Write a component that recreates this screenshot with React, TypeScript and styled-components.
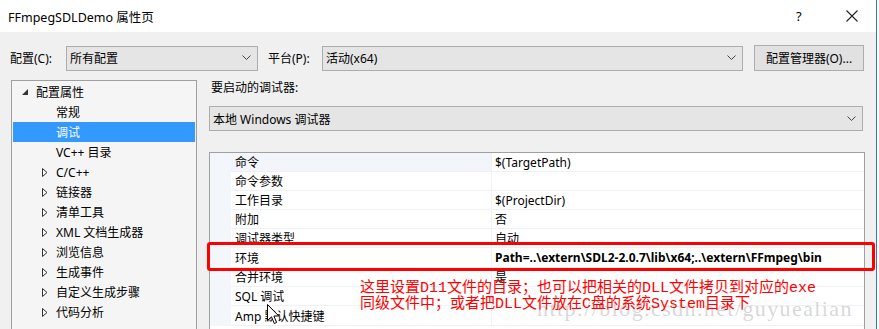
import styled, { createGlobalStyle } from "styled-components";

const GlobalStyle = createGlobalStyle`
  html, body {
    margin: 0;
    padding: 0;
    background: #ffffff;
    overflow: hidden;
  }
  body {
    font-family: "Noto Sans", "Noto Sans CJK SC", sans-serif;
    font-size: 12px;
    color: #000;
  }
`;

const Window = styled.div`
  position: relative;
  width: 876px;
  height: 329px;
  background: #f0f0f0;
  border-right: 1px solid #2b79c8;
  display: flex;
  flex-direction: column;
  overflow: hidden;
`;

const TitleBar = styled.div`
  height: 32px;
  flex: none;
  background: #ffffff;
  display: flex;
  align-items: center;
  padding-left: 8px;
  font-size: 12.5px;

  .title {
    flex: 1;
  }

  .help {
    width: 12px;
    margin-right: 32px;
    font-size: 13px;
  }

  .close {
    width: 24px;
    margin-right: 12px;
    display: flex;
    align-items: center;
    justify-content: center;
  }
`;

const ConfigRow = styled.div`
  display: flex;
  align-items: center;
  height: 26px;
  margin-top: 13px;
  padding-left: 10px;
`;

const Label = styled.span<{ $w: number }>`
  width: ${(p) => p.$w}px;
  flex: none;
`;

const Combo = styled.div<{ $w: number; $h?: number }>`
  box-sizing: border-box;
  width: ${(p) => p.$w}px;
  height: ${(p) => p.$h ?? 25}px;
  flex: none;
  background: #e5e5e5;
  border: 1px solid #adadad;
  display: flex;
  align-items: center;
  padding: 0 6px 0 3px;

  span {
    flex: 1;
  }
`;

const Button = styled.div`
  box-sizing: border-box;
  width: 110px;
  height: 26px;
  margin-left: 11px;
  background: #e1e1e1;
  border: 1px solid #adadad;
  display: flex;
  align-items: center;
  justify-content: center;
`;

const Body = styled.div`
  display: flex;
  margin-top: 9px;
  padding-left: 11px;
  flex: 1;
  min-height: 0;
`;

const Tree = styled.div`
  box-sizing: border-box;
  width: 186px;
  height: 260px;
  flex: none;
  background: #f5f5f5;
  border: 1px solid #a0a0a0;
  padding: 1px 1px 0;
  display: flex;
  flex-direction: column;
`;

const TreeItem = styled.div<{ $level: number; $selected?: boolean }>`
  height: 20px;
  display: flex;
  align-items: center;
  padding-left: ${(p) => (p.$level === 0 ? 9 : 29)}px;
  background: ${(p) => (p.$selected ? "#3399ff" : "transparent")};
  color: ${(p) => (p.$selected ? "#ffffff" : "#000")};

  .arrow {
    width: 14px;
    flex: none;
    display: flex;
    align-items: center;
  }
`;

const RightPane = styled.div`
  margin-left: 12px;
  width: 655px;
  display: flex;
  flex-direction: column;
`;

const Caption = styled.div`
  height: 16px;
  line-height: 16px;
  padding-left: 2px;
`;

const Grid = styled.div`
  box-sizing: border-box;
  margin-top: 21px;
  flex: 1;
  background: #ffffff;
  border: 1px solid #a0a0a0;
  border-bottom: none;
  width: 656px;
`;

const Row = styled.div<{ $active?: boolean; $h: number }>`
  display: flex;
  height: ${(p) => p.$h}px;
  padding-left: 21px;
  background: #f3f6fa;

  .name,
  .value {
    box-sizing: border-box;
    height: ${(p) => p.$h}px;
    display: flex;
    align-items: center;
    border-bottom: 1px solid #eef2f7;
    padding-left: 4px;
  }

  .name {
    width: 261px;
    background: ${(p) => (p.$active ? "#f2f5fa" : "#ffffff")};
    border-right: 1px solid #eef2f7;
  }

  .value {
    flex: 1;
    background: #ffffff;
    padding-left: 3px;
  }

  .bold {
    font-weight: 700;
    font-size: 12px;
  }
`;

const Highlight = styled.div`
  position: absolute;
  left: 207px;
  top: 242px;
  width: 668px;
  height: 29px;
  box-sizing: border-box;
  border: 3px solid #ff0000;
  border-radius: 3px;
`;

const Note = styled.div`
  position: absolute;
  left: 360px;
  top: 281px;
  color: #ff0000;
  font-family: "Liberation Mono", "Noto Sans CJK SC", monospace;
  font-size: 15px;
  line-height: 16px;
  white-space: nowrap;
`;

const Watermark = styled.div`
  position: absolute;
  left: 537px;
  top: 296px;
  color: rgba(140, 140, 140, 0.35);
  font-family: "Liberation Serif", serif;
  font-size: 22px;
  letter-spacing: 1.4px;
  white-space: nowrap;
`;

const Cursor = styled.svg`
  position: absolute;
  left: 267px;
  top: 304px;
`;

const Chevron = () => (
  <svg width="9" height="6" viewBox="0 0 9 6">
    <path d="M0.5 0.5 L4.5 4.5 L8.5 0.5" fill="none" stroke="#444" strokeWidth="1" />
  </svg>
);

const Expanded = () => (
  <svg width="6" height="6" viewBox="0 0 6 6">
    <path d="M6 0 L6 6 L0 6 Z" fill="#333" />
  </svg>
);

const Collapsed = () => (
  <svg width="6" height="9" viewBox="0 0 6 9">
    <path d="M0.5 0.5 L5 4.5 L0.5 8.5 Z" fill="none" stroke="#333" strokeWidth="1" />
  </svg>
);

const tree: { label: string; level: number; kind?: "open" | "closed"; selected?: boolean }[] = [
  { label: "配置属性", level: 0, kind: "open" },
  { label: "常规", level: 1 },
  { label: "调试", level: 1, selected: true },
  { label: "VC++ 目录", level: 1 },
  { label: "C/C++", level: 1, kind: "closed" },
  { label: "链接器", level: 1, kind: "closed" },
  { label: "清单工具", level: 1, kind: "closed" },
  { label: "XML 文档生成器", level: 1, kind: "closed" },
  { label: "浏览信息", level: 1, kind: "closed" },
  { label: "生成事件", level: 1, kind: "closed" },
  { label: "自定义生成步骤", level: 1, kind: "closed" },
  { label: "代码分析", level: 1, kind: "closed" },
];

const props: { name: string; value: string; h: number; bold?: boolean }[] = [
  { name: "命令", value: "$(TargetPath)", h: 19 },
  { name: "命令参数", value: "", h: 19 },
  { name: "工作目录", value: "$(ProjectDir)", h: 19 },
  { name: "附加", value: "否", h: 19 },
  { name: "调试器类型", value: "自动", h: 19 },
  { name: "环境", value: "Path=..\\extern\\SDL2-2.0.7\\lib\\x64;..\\extern\\FFmpeg\\bin", h: 20, bold: true },
  { name: "合并环境", value: "是", h: 19 },
  { name: "SQL 调试", value: "", h: 19 },
  { name: "Amp 默认快捷键", value: "", h: 20 },
];

export default function App() {
  return (
    <>
      <GlobalStyle />
      <Window>
        <TitleBar>
          <span className="title">FFmpegSDLDemo 属性页</span>
          <span className="help">?</span>
          <span className="close">
            <svg width="12" height="12" viewBox="0 0 12 12">
              <path d="M0.5 0.5 L11.5 11.5 M11.5 0.5 L0.5 11.5" stroke="#222" strokeWidth="1.1" />
            </svg>
          </span>
        </TitleBar>

        <ConfigRow>
          <Label $w={56}>配置(C):</Label>
          <Combo $w={192}>
            <span>所有配置</span>
            <Chevron />
          </Combo>
          <Label $w={54} style={{ marginLeft: 10 }}>
            平台(P):
          </Label>
          <Combo $w={421}>
            <span>活动(x64)</span>
            <Chevron />
          </Combo>
          <Button>配置管理器(O)...</Button>
        </ConfigRow>

        <Body>
          <Tree>
            {tree.map((t) => (
              <TreeItem key={t.label} $level={t.level} $selected={t.selected}>
                <span className="arrow">
                  {t.kind === "open" && <Expanded />}
                  {t.kind === "closed" && <Collapsed />}
                </span>
                {t.label}
              </TreeItem>
            ))}
          </Tree>

          <RightPane>
            <Caption>要启动的调试器:</Caption>
            <Combo $w={654} $h={25} style={{ marginTop: 10 }}>
              <span>本地 Windows 调试器</span>
              <Chevron />
            </Combo>
            <Grid>
              {props.map((p, i) => (
                <Row key={p.name} $h={p.h} $active={i === 0}>
                  <div className="name">{p.name}</div>
                  <div className={p.bold ? "value bold" : "value"}>{p.value}</div>
                </Row>
              ))}
            </Grid>
          </RightPane>
        </Body>

        <Highlight />
        <Watermark>http://blog.csdn.net/guyuealian</Watermark>
        <Note>
          这里设置D11文件的目录；也可以把相关的DLL文件拷贝到对应的exe
          <br />
          同级文件中；或者把DLL文件放在C盘的系统System目录下
        </Note>
        <Cursor width="13" height="21" viewBox="0 0 13 21">
          <path
            d="M0.5 0.5 L0.5 16.5 L4.5 12.8 L7.3 19.5 L9.6 18.5 L6.9 12 L11.8 12 Z"
            fill="#ffffff"
            stroke="#000"
            strokeWidth="1"
          />
        </Cursor>
      </Window>
    </>
  );
}
